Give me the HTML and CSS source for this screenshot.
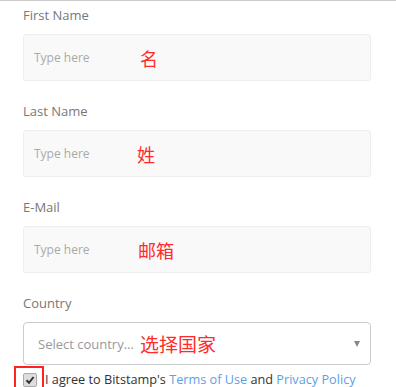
FILE: index.html
```html
<!DOCTYPE html>
<html lang="en">
<head>
  <meta charset="UTF-8">
  <title>Register</title>
  <link rel="stylesheet" href="styles.css">
</head>
<body>

<div class="form">
  <div class="field">
    <label>First Name</label>
    <div class="input">
      <span class="placeholder">Type here</span>
      <span class="note note-first">名</span>
    </div>
  </div>

  <div class="field">
    <label>Last Name</label>
    <div class="input">
      <span class="placeholder">Type here</span>
      <span class="note note-last">姓</span>
    </div>
  </div>

  <div class="field">
    <label>E-Mail</label>
    <div class="input">
      <span class="placeholder">Type here</span>
      <span class="note note-mail">邮箱</span>
    </div>
  </div>

  <div class="field field-select">
    <label>Country</label>
    <div class="select">
      <span class="select-text">Select country...</span>
      <span class="note note-country">选择国家</span>
      <span class="arrow"></span>
    </div>
  </div>

  <div class="agree">
    <span class="mark">
      <span class="checkbox">
        <svg width="10" height="10" viewBox="0 0 10 10"><path d="M1.5 5.2 L4 7.8 L8.6 2" fill="none" stroke="#333" stroke-width="2"/></svg>
      </span>
    </span>
    <span class="agree-text">I agree to Bitstamp's <a href="#">Terms of Use</a> and <a href="#">Privacy Policy</a></span>
  </div>
</div>

</body>
</html>
```

FILE: styles.css
```css
body {
  margin: 0;
  background: #fff;
  border-top: 1px solid #ccc;
  font-family: "Open Sans", "Noto Sans", sans-serif;
  color: #777;
}
.form {
  width: 348px;
  padding: 5px 0 0 23px;
}
.field {
  margin-bottom: 21px;
}
.field label {
  display: block;
  font-size: 13px;
  line-height: 18px;
  margin-bottom: 10px;
}
.input {
  height: 45px;
  background: #f9f9f9;
  border: 1px solid #eee;
  border-radius: 3px;
  display: flex;
  align-items: center;
  padding-left: 10px;
}
.placeholder {
  font-size: 12px;
  color: #aaa;
  width: 104px;
}
.note {
  font-family: "Noto Sans CJK SC", sans-serif;
  color: #ff2a2a;
  font-size: 18px;
  line-height: 20px;
}
.note-first { margin-left: 2px; }
.note-last { margin-left: -1px; }
.note-country { font-size: 19px; margin-left: 6px; }
.field-select { margin-bottom: 0; }
.select {
  height: 41px;
  border: 1px solid #ccc;
  border-radius: 4px;
  display: flex;
  align-items: center;
  padding-left: 14px;
}
.select-text {
  font-size: 13px;
  color: #999;
  font-family: "Open Sans", sans-serif;
}
.arrow {
  margin-left: auto;
  margin-right: 10px;
  width: 0;
  height: 0;
  border-left: 3px solid transparent;
  border-right: 3px solid transparent;
  border-top: 6px solid #888;
}
.agree {
  display: flex;
  align-items: flex-start;
  margin-left: -9px;
  margin-top: 1px;
  font-size: 12.7px;
}
.mark {
  border: 2px solid #f22;
  border-bottom: none;
  padding: 5px 5px 0 7px;
  height: 20px;
}
.checkbox {
  display: flex;
  align-items: center;
  justify-content: center;
  width: 12px;
  height: 12px;
  background: #ddd;
  border: 1px solid #aaa;
  border-radius: 2px;
}
.agree-text {
  margin-left: 1px;
  margin-top: 4px;
  color: #333;
}
.agree-text a {
  color: #5da0e6;
  text-decoration: none;
}
```
